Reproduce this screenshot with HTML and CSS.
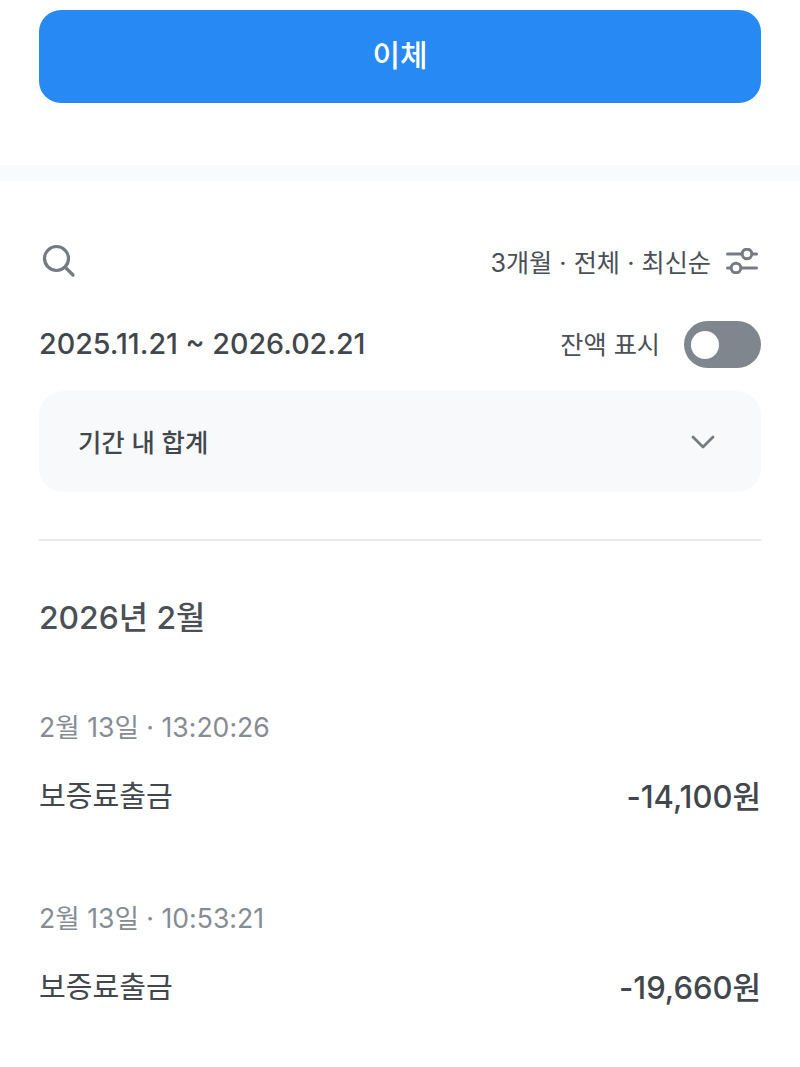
FILE: index.html
```html
<!DOCTYPE html>
<html lang="ko">
<head>
<meta charset="utf-8">
<title>이체</title>
<link rel="stylesheet" href="styles.css">
</head>
<body>
<div class="top">
  <button class="transfer">이체</button>
</div>
<div class="band"></div>
<main class="content">
  <div class="toolbar">
    <svg class="search" width="36" height="36" viewBox="0 0 36 36" fill="none"><circle cx="16.5" cy="15.5" r="12" stroke="#747b83" stroke-width="3.2"/><path d="M25.5 24.5L33 32" stroke="#747b83" stroke-width="3.2" stroke-linecap="round"/></svg>
    <div class="filter">
      <span>3개월 · 전체 · 최신순</span>
      <svg width="32" height="26" viewBox="0 0 32 26" fill="none"><path d="M1.5 6H15M27 6H30.5M1.5 20H4M16 20H30.5" stroke="#747b83" stroke-width="3" stroke-linecap="round"/><circle cx="21" cy="6" r="4.8" stroke="#747b83" stroke-width="3"/><circle cx="10" cy="20" r="4.8" stroke="#747b83" stroke-width="3"/></svg>
    </div>
  </div>
  <div class="range-row">
    <div class="range">2025.11.21 ~ 2026.02.21</div>
    <div class="balance">
      <span class="balance-label">잔액 표시</span>
      <div class="toggle"><div class="knob"></div></div>
    </div>
  </div>
  <div class="summary">
    <span class="summary-label">기간 내 합계</span>
    <svg width="24" height="14" viewBox="0 0 24 14" fill="none"><path d="M2 2L12 12L22 2" stroke="#747b83" stroke-width="2.8" stroke-linecap="round" stroke-linejoin="round"/></svg>
  </div>
  <hr class="rule">
  <h2 class="month">2026년 2월</h2>
  <section class="tx">
    <div class="tx-date">2월 13일 · 13:20:26</div>
    <div class="tx-row"><span class="tx-name">보증료출금</span><span class="tx-amount">-14,100원</span></div>
  </section>
  <section class="tx">
    <div class="tx-date">2월 13일 · 10:53:21</div>
    <div class="tx-row"><span class="tx-name">보증료출금</span><span class="tx-amount">-19,660원</span></div>
  </section>
</main>
</body>
</html>
```
FILE: styles.css
```css
* { box-sizing: border-box; }
html, body { margin: 0; padding: 0; background: #fff; }
body {
  width: 800px;
  height: 1067px;
  overflow: hidden;
  font-family: Inter, "Noto Sans CJK KR", sans-serif;
  color: #42474e;
}
.top { padding: 10px 39px 62px; }
.transfer {
  display: block;
  width: 100%;
  height: 93px;
  border: 0;
  border-radius: 22px;
  padding: 0 0 7px;
  background: #2789f3;
  color: #fff;
  font: 500 30px Inter, "Noto Sans CJK KR", sans-serif;
}
.band { height: 16px; background: #f9fafb; }
.content { padding: 60px 39px 0; }
.toolbar { display: flex; justify-content: space-between; align-items: center; height: 40px; }
.search { display: block; margin-left: 1px; }
.filter { display: flex; align-items: center; gap: 15px; font-size: 25.2px; color: #4a5058; padding-right: 3px; }
.range-row { display: flex; justify-content: space-between; align-items: center; height: 47px; margin-top: 40px; }
.range { font-size: 28.65px; font-weight: 550; padding-bottom: 2px; }
.balance { display: flex; align-items: center; gap: 24px; font-size: 25.2px; color: #4a5058; }
.balance-label { padding-bottom: 4px; }
.toggle { width: 77px; height: 47px; border-radius: 24px; background: #7f868e; padding: 9.5px 7px; }
.knob { width: 28px; height: 28px; border-radius: 50%; background: #fff; }
.summary {
  display: flex; justify-content: space-between; align-items: center;
  height: 101px; margin-top: 23px; padding: 0 46px 0 39px;
  border-radius: 24px; background: #f8f9fb;
  font-size: 25.4px; font-weight: 500;
}
.summary-label { padding-bottom: 2px; }
.rule { height: 2px; border: 0; background: #e9ebee; margin: 47px 0 0; }
.month { margin: 54px 0 0; font-size: 31.8px; line-height: 46px; font-weight: 550; color: #4b5056; }
.tx { height: 191px; }
.month + .tx { margin-top: 68px; }
.tx-date { font-size: 26.6px; line-height: 36px; color: #868c94; }
.tx-row { display: flex; justify-content: space-between; align-items: center; margin-top: 30px; height: 38px; font-size: 29.1px; }
.tx-amount { font-weight: 550; font-size: 31px; }
```
